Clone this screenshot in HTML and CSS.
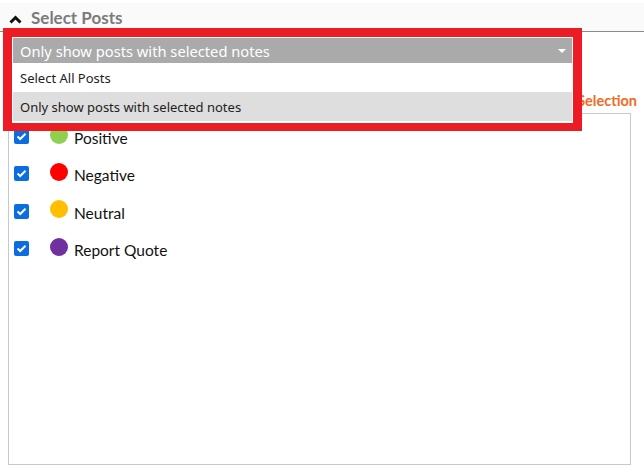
FILE: index.html
```html
<!DOCTYPE html>
<html lang="en">
<head>
    <meta charset="UTF-8">
    <meta name="viewport" content="width=device-width, initial-scale=1.0">
    <title>Select Posts</title>
    <link rel="stylesheet" href="styles.css">
</head>
<body>
    <div class="section-head">
        <svg class="chevron" width="13" height="9" viewBox="0 0 13 9">
            <path d="M1.5 7.5 L6.5 2.5 L11.5 7.5" fill="none" stroke="#111" stroke-width="3"/>
        </svg>
        <span class="section-title">Select Posts</span>
    </div>

    <div class="filter-row">
        <a class="clear-link">Clear Selection</a>
    </div>

    <div class="notes-box">
        <div class="note-row">
            <span class="check"><svg width="11" height="9" viewBox="0 0 11 9"><path d="M1.5 4.5 L4.2 7 L9.5 1.8" fill="none" stroke="#fff" stroke-width="2"/></svg></span>
            <span class="dot dot-positive"></span>
            <span class="note-label">Positive</span>
        </div>
        <div class="note-row">
            <span class="check"><svg width="11" height="9" viewBox="0 0 11 9"><path d="M1.5 4.5 L4.2 7 L9.5 1.8" fill="none" stroke="#fff" stroke-width="2"/></svg></span>
            <span class="dot dot-negative"></span>
            <span class="note-label">Negative</span>
        </div>
        <div class="note-row">
            <span class="check"><svg width="11" height="9" viewBox="0 0 11 9"><path d="M1.5 4.5 L4.2 7 L9.5 1.8" fill="none" stroke="#fff" stroke-width="2"/></svg></span>
            <span class="dot dot-neutral"></span>
            <span class="note-label">Neutral</span>
        </div>
        <div class="note-row">
            <span class="check"><svg width="11" height="9" viewBox="0 0 11 9"><path d="M1.5 4.5 L4.2 7 L9.5 1.8" fill="none" stroke="#fff" stroke-width="2"/></svg></span>
            <span class="dot dot-quote"></span>
            <span class="note-label">Report Quote</span>
        </div>
    </div>

    <!-- open dropdown, highlighted -->
    <div class="dropdown-callout">
        <div class="select-box">
            <span>Only show posts with selected notes</span>
            <span class="caret"></span>
        </div>
        <div class="option">Select All Posts</div>
        <div class="option option-active">Only show posts with selected notes</div>
    </div>
</body>
</html>
```

FILE: styles.css
```css
body {
    margin: 0;
    font-family: Lato, "Open Sans", sans-serif;
    background-color: #fff;
    position: relative;
    height: 476px;
    overflow: hidden;
}
.section-head {
    margin-top: 3px;
    height: 28px;
    background-color: #fafafa;
    border-bottom: 1px solid #8a8a8a;
    display: flex;
    align-items: center;
    padding-left: 9px;
}
.chevron {
    margin-top: 5px;
    margin-right: 9px;
}
.section-title {
    font-size: 17px;
    font-weight: bold;
    color: #7b7b7b;
    margin-top: 1px;
}
.filter-row {
    height: 81px;
    display: flex;
    align-items: flex-end;
    justify-content: flex-end;
    padding-right: 7px;
}
.clear-link {
    font-size: 14.5px;
    font-weight: bold;
    color: #f26a25;
    margin-bottom: 4px;
}
.notes-box {
    margin-left: 8px;
    width: 623px;
    height: 352px;
    border: 1px solid #c8c8c8;
    padding: 4px 0 0 5px;
    box-sizing: border-box;
}
.note-row {
    height: 37.3px;
    display: flex;
    align-items: center;
}
.check {
    width: 15px;
    height: 15px;
    border-radius: 2px;
    background-color: #0b6ddf;
    display: flex;
    align-items: center;
    justify-content: center;
    margin-right: 21px;
}
.dot {
    width: 18px;
    height: 18px;
    border-radius: 50%;
    margin-right: 6px;
    margin-top: -4px;
}
.dot-positive { background-color: #8fd14f; }
.dot-negative { background-color: #ff0000; }
.dot-neutral { background-color: #ffbf00; }
.dot-quote { background-color: #7030a0; }
.note-label {
    font-size: 15.5px;
    color: #111;
    margin-top: 3px;
}
.dropdown-callout {
    position: absolute;
    top: 28px;
    left: 3px;
    width: 579px;
    border: 9px solid #ed1c24;
    border-bottom-width: 8px;
    padding: 1px 1px 2px 1px;
    background-color: #fff;
    box-sizing: border-box;
    font-family: "Noto Sans", "Open Sans", sans-serif;
    font-size: 13px;
}
.select-box {
    height: 25px;
    background-color: #aaaaaa;
    color: #fff;
    font-size: 14.7px;
    display: flex;
    align-items: center;
    justify-content: space-between;
    padding: 0 6px 0 7px;
}
.caret {
    width: 0;
    height: 0;
    border-left: 4px solid transparent;
    border-right: 4px solid transparent;
    border-top: 4px solid #fff;
}
.option {
    height: 29px;
    display: flex;
    align-items: center;
    padding-left: 7px;
    color: #222;
}
.option-active {
    background-color: #dedede;
}
```
